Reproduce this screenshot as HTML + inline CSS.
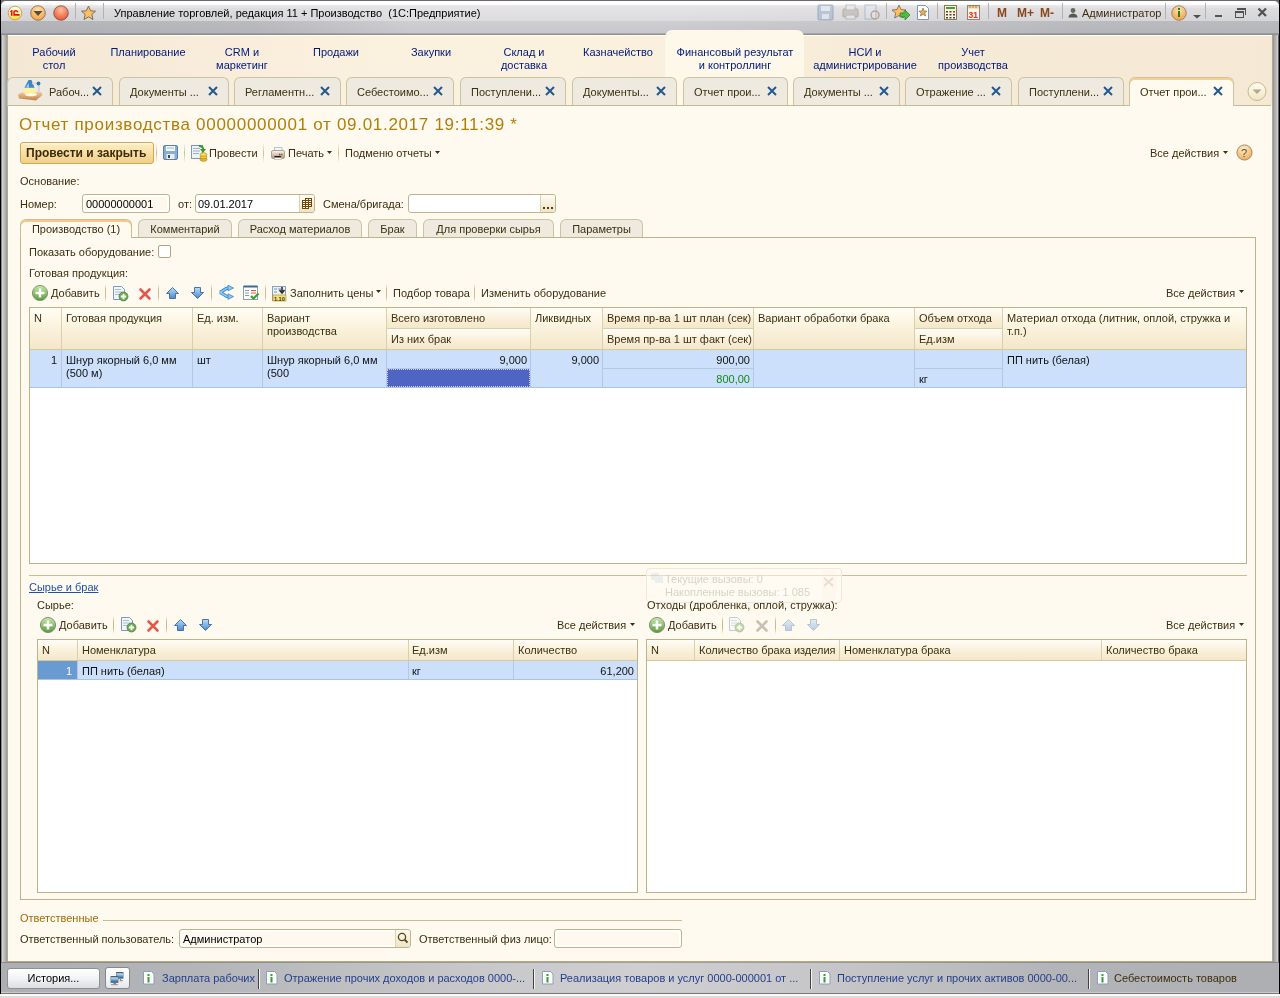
<!DOCTYPE html>
<html><head><meta charset="utf-8">
<style>
*{margin:0;padding:0;box-sizing:border-box}
html,body{width:1280px;height:998px;overflow:hidden;background:#a8aaad;font-family:"Liberation Sans",sans-serif;font-size:11px;color:#3c2f0f}
.a{position:absolute}
.t{position:absolute;white-space:nowrap;line-height:13px;font-size:11px;will-change:transform}
.c{text-align:center}
.r{text-align:right}
svg{position:absolute;overflow:visible}
#frameL{left:0;top:0;width:1px;height:994px;background:#000}
#frameR{left:1279px;top:0;width:1px;height:994px;background:#000}
#frameT{left:1px;top:0;width:1278px;height:1px;background:#6a6a6e}
#corner{left:1px;top:0;width:1278px;height:7px;background:#78787c}
#title{left:1px;top:1px;width:1278px;height:20px;border-radius:5px 5px 0 0;background:linear-gradient(#fff 0,#fff 3px,#e6e4e6 5px,#dcdbdd 20px)}
#band{left:1px;top:21px;width:1278px;height:14px;background:linear-gradient(#cfcfd2 0,#c8c8cc 12px,#8e8e92 13px,#8e8e92 14px)}
#hshade{left:1px;top:21px;width:1278px;height:13px;background:linear-gradient(90deg,rgba(40,45,55,.16) 0,rgba(40,45,55,.12) 20%,rgba(40,45,55,0) 32%,rgba(40,45,55,0) 52%,rgba(40,45,55,.06) 70%,rgba(40,45,55,.12) 85%,rgba(40,45,55,.12) 100%)}
#tshade{left:1px;top:8px;width:1278px;height:13px;background:linear-gradient(90deg,rgba(40,45,55,.05) 0,rgba(40,45,55,.03) 20%,rgba(40,45,55,0) 32%,rgba(40,45,55,0) 52%,rgba(40,45,55,.02) 70%,rgba(40,45,55,.04) 100%)}
#lframe{left:1px;top:35px;width:6px;height:927px;background:linear-gradient(90deg,#8a8a8a 0,#8a8a8a 1px,#d2d2d2 1px,#d2d2d2 2px,#c4c4c4 2px,#c4c4c4 3px,#bcbcbc 3px,#bcbcbc 4px,#acaeb0 4px,#acaeb0 5px,#9ca2a6 5px)}
#rframe{left:1273px;top:35px;width:6px;height:927px;background:linear-gradient(90deg,#9498a0 0,#9498a0 1px,#a8a8b0 1px,#a8a8b0 2px,#b4b4b4 2px,#b4b4b4 3px,#babcbc 3px,#babcbc 4px,#d0d0d4 4px,#d0d0d4 5px,#606060 5px)}
#content{left:7px;top:35px;width:1266px;height:927px;background:#fffaef;border:1px solid #b3aa82;border-top:none;box-shadow:inset 1px 0 0 #fffff4,inset -1px 0 0 #fffff4}
#secbar{left:8px;top:35px;width:1264px;height:70px;background:linear-gradient(#fffff2 0,#fffff2 1px,rgba(255,255,255,0) 1px),linear-gradient(90deg,#f4e8d4 0,#fbf1df 30%,#fbf1df 45%,#f6ebd7 70%,#f5e9d5 100%)}
#status{left:1px;top:962px;width:1278px;height:32px;background:linear-gradient(#a0a0a4 0,#a0a0a4 1px,#cfcfd1 1px,#cfcfd1 30px,#c8cacc 30px,#c8cacc 31px,#7a7a7c 31px)}
#sshade{left:1px;top:962px;width:1278px;height:30px;background:linear-gradient(90deg,rgba(40,45,55,.2) 0,rgba(40,45,55,.16) 15%,rgba(40,45,55,.04) 38%,rgba(40,45,55,0) 50%,rgba(40,45,55,.06) 66%,rgba(40,45,55,.16) 82%,rgba(40,45,55,.2) 100%)}
#bottom{left:0;top:994px;width:1280px;height:4px;background:linear-gradient(#fafafa 0,#fafafa 2px,#dedcd8 2px)}
.sep{position:absolute;width:1px;background:#a9abad;border-right:1px solid #f4f4f4}
.sec{position:absolute;color:#00177e;text-align:center;line-height:13px;white-space:nowrap;will-change:transform}
.tab{position:absolute;top:77px;height:29px;background:#eeeadf;border:1px solid #cdc3a0;border-bottom:none;border-radius:6px 6px 0 0}
.tab .t{top:4px;color:#3d300c;line-height:13px}
.x{position:absolute;top:9px;width:10px;height:10px}
.tabline{left:8px;top:105px;width:1263px;height:1px;background:#c6ba8e}
</style></head><body>
<div class="a" id="corner"></div>
<div class="a" id="title"></div>
<div class="a" id="band"></div>
<div class="a" id="hshade"></div>
<div class="a" id="tshade"></div>
<div class="a" id="lframe"></div>
<div class="a" id="rframe"></div>
<div class="a" id="status"></div>
<div class="a" id="sshade"></div>
<div class="a" id="content"></div>
<div class="a" id="secbar"></div>
<div class="a" id="frameT"></div>
<div class="a" id="frameL"></div>
<div class="a" id="frameR"></div>
<div class="a" id="bottom"></div>

<!-- title bar icons -->
<svg style="left:0;top:0" width="120" height="22">
 <defs>
  <linearGradient id="g1c" x1="0" y1="0" x2="0" y2="1"><stop offset="0" stop-color="#fffde8"/><stop offset="0.55" stop-color="#fff4a0"/><stop offset="1" stop-color="#ffdc10"/></linearGradient>
  <radialGradient id="gor" cx="0.5" cy="0.3" r="0.7"><stop offset="0" stop-color="#ffe2b0"/><stop offset="1" stop-color="#f5a040"/></radialGradient>
  <radialGradient id="grd" cx="0.5" cy="0.3" r="0.7"><stop offset="0" stop-color="#ffc0a0"/><stop offset="1" stop-color="#ee5030"/></radialGradient>
 </defs>
 <circle cx="15" cy="13" r="6.8" fill="url(#g1c)" stroke="#c49868" stroke-width="0.9"/>
 <path d="M10 11.2 L11.6 10 L12.5 10 L12.5 15.8 L10.9 15.8 L10.9 12.2 Z" fill="#e81010"/>
 <path d="M13.3 15.8 L13.3 11.6 Q13.7 10 15.6 10 Q17.9 10 18.5 11.9 L17.1 12.5 Q16.8 11.5 15.7 11.5 Q14.8 11.5 14.8 12.3 L14.8 14.1 L19.6 14.1 L19.6 15.8 Z" fill="#e81010"/>
 <circle cx="38" cy="13" r="7.3" fill="url(#gor)" stroke="#7a6a5a" stroke-width="0.8"/>
 <path d="M33.5 11 L42.5 11 L38 16 Z" fill="#5a4a3a"/>
 <circle cx="61" cy="13" r="7.3" fill="url(#grd)" stroke="#6a5a4a" stroke-width="0.8"/>
 <rect x="75" y="3" width="1" height="16" fill="#b0b2b4"/>
 <path d="M88.5 6 L90.6 10.8 L95.5 11.2 L91.8 14.4 L93 19.5 L88.5 16.8 L84 19.5 L85.2 14.4 L81.5 11.2 L86.4 10.8 Z" fill="#fbc060" stroke="#6e6458" stroke-width="0.9"/>
 <rect x="103" y="3" width="1" height="16" fill="#b0b2b4"/>
</svg>
<div class="t" style="left:114px;top:7px;color:#000">Управление торговлей, редакция 11 + Производство&nbsp; (1С:Предприятие)</div>

<!-- title bar right icons -->
<svg style="left:810px;top:0" width="470" height="22">
 <g opacity="0.45">
  <rect x="8" y="5" width="15" height="15" rx="1" fill="#8aa8c8" stroke="#50709a"/>
  <rect x="11" y="6" width="9" height="5" fill="#e8eef4"/>
  <rect x="12" y="14" width="7" height="5" fill="#e8eef4"/>
  <rect x="33" y="9" width="15" height="8" rx="1" fill="#b0a8a0" stroke="#807068"/>
  <rect x="36" y="5" width="9" height="5" fill="#f0f0f0" stroke="#909090"/>
  <rect x="36" y="15" width="9" height="4" fill="#f0f0f0" stroke="#909090"/>
  <rect x="55" y="5" width="11" height="14" fill="#e0e8f0" stroke="#7890a8"/>
  <circle cx="65" cy="15" r="4" fill="none" stroke="#906040" stroke-width="1.5"/>
 </g>
 <rect x="76" y="3" width="1" height="16" fill="#b0b2b4"/>
 <path d="M89 5 L91 9.5 L96 10 L92.3 13 L93.3 18 L89 15.5 L84.7 18 L85.7 13 L82 10 L87 9.5 Z" fill="#fbc060" stroke="#6e6458" stroke-width="0.8"/>
 <path d="M90 13 h5 v-3 l5 5 l-5 5 v-3 h-5 z" fill="#48c040" stroke="#2a7a2a" stroke-width="0.7"/>
 <path d="M107.5 5.5 h8 l3 3 v11 h-11 z" fill="#fff" stroke="#7a9ab8"/>
 <path d="M113 8 L114.2 11 L117 11.2 L114.8 13 L115.6 16 L113 14.4 L110.4 16 L111.2 13 L109 11.2 L111.8 11 Z" fill="#f0b040" stroke="#6e6458" stroke-width="0.6"/>
 <rect x="127" y="3" width="1" height="16" fill="#b0b2b4"/>
 <rect x="134.5" y="5.5" width="12" height="14" fill="#fbf3d8" stroke="#8a7a5a"/>
 <rect x="136" y="7" width="9" height="2" fill="#40a040"/>
 <g fill="#444"><rect x="136" y="11" width="2" height="1.5"/><rect x="139.5" y="11" width="2" height="1.5"/><rect x="143" y="11" width="2" height="1.5" fill="#e03020"/><rect x="136" y="14" width="2" height="1.5"/><rect x="139.5" y="14" width="2" height="1.5"/><rect x="143" y="14" width="2" height="1.5"/><rect x="136" y="17" width="2" height="1.5"/><rect x="139.5" y="17" width="2" height="1.5"/><rect x="143" y="17" width="2" height="1.5"/></g>
 <rect x="157.5" y="5.5" width="12" height="14" fill="#fdf6ec" stroke="#8a8478"/>
 <rect x="158" y="6" width="11" height="2.5" fill="#f6cc88"/>
 <g fill="#6a4a2a"><rect x="159.5" y="6.5" width="1" height="1"/><rect x="162.5" y="6.5" width="1" height="1"/><rect x="165.5" y="6.5" width="1" height="1"/></g>
 <text x="158.6" y="18" font-family="Liberation Sans" font-size="9.5" font-weight="bold" fill="#e83020" textLength="9.5" lengthAdjust="spacingAndGlyphs">31</text>
 <rect x="178" y="3" width="1" height="16" fill="#b0b2b4"/>
</svg>
<div class="t" style="left:997px;top:7px;color:#8a4818;font-weight:bold;font-size:12px">M</div>
<div class="t" style="left:1017px;top:7px;color:#8a4818;font-weight:bold;font-size:12px">M+</div>
<div class="t" style="left:1040px;top:7px;color:#8a4818;font-weight:bold;font-size:12px">M-</div>
<svg style="left:1060px;top:0" width="220" height="22">
 <rect x="2" y="3" width="1" height="16" fill="#b0b2b4"/>
 <circle cx="13" cy="10.5" r="2.4" fill="#6a6660"/>
 <path d="M8.5 17.5 Q8.5 14 13 13.5 Q17.5 14 17.5 17.5 Z" fill="#5a5650"/>
 <rect x="105" y="3" width="1" height="16" fill="#b0b2b4"/>
 <circle cx="119" cy="13" r="7.3" fill="url(#gor)" stroke="#8a7a6a" stroke-width="0.8"/>
 <rect x="118" y="11" width="2" height="6" fill="#208020"/>
 <rect x="118" y="8" width="2" height="2" fill="#208020"/>
 <path d="M133 15 h8 l-4 3.5 z" fill="#505050"/>
 <rect x="145" y="3" width="1" height="16" fill="#b0b2b4"/>
 <rect x="155" y="15" width="7" height="2" fill="#555"/>
 <rect x="177" y="8" width="9" height="2" fill="#505050"/><rect x="185" y="8" width="1" height="7" fill="#505050"/>
 <rect x="175.5" y="11.5" width="8" height="6" fill="none" stroke="#505050" stroke-width="1"/><rect x="175" y="11" width="9" height="2" fill="#505050"/>
 <path d="M198.5 8.5 L206 16 M206 8.5 L198.5 16" stroke="#505050" stroke-width="2.2"/>
</svg>
<div class="t" style="left:1082px;top:7px;color:#3c2f0f">Администратор</div>
<svg style="left:0;top:0" width="0" height="0"><defs><linearGradient id="gu" x1="0" y1="0" x2="0" y2="1"><stop offset="0" stop-color="#b8dcf8"/><stop offset="1" stop-color="#4a8ad0"/></linearGradient><linearGradient id="gd" x1="0" y1="0" x2="0" y2="1"><stop offset="0" stop-color="#b8dcf8"/><stop offset="1" stop-color="#4a8ad0"/></linearGradient></defs></svg>
<div class="a" style="left:665px;top:30px;width:139px;height:75px;background:#fdf8ea;border-radius:7px 7px 0 0"></div>
<div class="sec" style="left:-26px;top:46px;width:160px">Рабочий<br>стол</div>
<div class="sec" style="left:68px;top:46px;width:160px">Планирование</div>
<div class="sec" style="left:162px;top:46px;width:160px">CRM и<br>маркетинг</div>
<div class="sec" style="left:256px;top:46px;width:160px">Продажи</div>
<div class="sec" style="left:350.5px;top:46px;width:160px">Закупки</div>
<div class="sec" style="left:444px;top:46px;width:160px">Склад и<br>доставка</div>
<div class="sec" style="left:538px;top:46px;width:160px">Казначейство</div>
<div class="sec" style="left:655px;top:46px;width:160px">Финансовый результат<br>и контроллинг</div>
<div class="sec" style="left:785px;top:46px;width:160px">НСИ и<br>администрирование</div>
<div class="sec" style="left:892.5px;top:46px;width:160px">Учет<br>производства</div>
<div class="tab" style="left:7px;width:106px"><div class="t" style="left:41px;top:8px">Рабоч...</div><svg style="left:84px;top:8px" width="10" height="10"><path d="M1 1 L9 9 M9 1 L1 9" stroke="#24588c" stroke-width="2"/></svg></div>
<div class="tab" style="left:119px;width:110px"><div class="t" style="left:10px;top:8px">Документы ...</div><svg style="left:88px;top:8px" width="10" height="10"><path d="M1 1 L9 9 M9 1 L1 9" stroke="#24588c" stroke-width="2"/></svg></div>
<div class="tab" style="left:234px;width:107px"><div class="t" style="left:10px;top:8px">Регламентн...</div><svg style="left:85px;top:8px" width="10" height="10"><path d="M1 1 L9 9 M9 1 L1 9" stroke="#24588c" stroke-width="2"/></svg></div>
<div class="tab" style="left:346px;width:108px"><div class="t" style="left:10px;top:8px">Себестоимо...</div><svg style="left:86px;top:8px" width="10" height="10"><path d="M1 1 L9 9 M9 1 L1 9" stroke="#24588c" stroke-width="2"/></svg></div>
<div class="tab" style="left:460px;width:106px"><div class="t" style="left:10px;top:8px">Поступлени...</div><svg style="left:84px;top:8px" width="10" height="10"><path d="M1 1 L9 9 M9 1 L1 9" stroke="#24588c" stroke-width="2"/></svg></div>
<div class="tab" style="left:572px;width:105px"><div class="t" style="left:10px;top:8px">Документы...</div><svg style="left:83px;top:8px" width="10" height="10"><path d="M1 1 L9 9 M9 1 L1 9" stroke="#24588c" stroke-width="2"/></svg></div>
<div class="tab" style="left:683px;width:105px"><div class="t" style="left:10px;top:8px">Отчет прои...</div><svg style="left:83px;top:8px" width="10" height="10"><path d="M1 1 L9 9 M9 1 L1 9" stroke="#24588c" stroke-width="2"/></svg></div>
<div class="tab" style="left:793px;width:107px"><div class="t" style="left:10px;top:8px">Документы ...</div><svg style="left:85px;top:8px" width="10" height="10"><path d="M1 1 L9 9 M9 1 L1 9" stroke="#24588c" stroke-width="2"/></svg></div>
<div class="tab" style="left:905px;width:107px"><div class="t" style="left:10px;top:8px">Отражение ...</div><svg style="left:85px;top:8px" width="10" height="10"><path d="M1 1 L9 9 M9 1 L1 9" stroke="#24588c" stroke-width="2"/></svg></div>
<div class="tab" style="left:1018px;width:106px"><div class="t" style="left:10px;top:8px">Поступлени...</div><svg style="left:84px;top:8px" width="10" height="10"><path d="M1 1 L9 9 M9 1 L1 9" stroke="#24588c" stroke-width="2"/></svg></div>
<div class="tab" style="left:1129px;width:105px;background:#fffaef;border-color:#cdc3a0;box-shadow:inset 0 2px 0 #f9cf8c;height:29px"><div class="t" style="left:10px;top:8px">Отчет прои...</div><svg style="left:83px;top:8px" width="10" height="10"><path d="M1 1 L9 9 M9 1 L1 9" stroke="#24588c" stroke-width="2"/></svg></div>
<div class="a tabline" style="left:8px;width:1121px"></div>
<div class="a tabline" style="left:1234px;width:37px"></div>
<svg style="left:14px;top:78px" width="32" height="24">
 <defs><linearGradient id="gdesk" x1="0" y1="0" x2="0" y2="1"><stop offset="0" stop-color="#f4c89a"/><stop offset="1" stop-color="#c0844a"/></linearGradient></defs>
 <path d="M4 16.5 L9 14 L27 14 L28.5 17 L22 22.5 L5 20.5 Z" fill="url(#gdesk)"/>
 <ellipse cx="17" cy="16.5" rx="6" ry="1.8" fill="#fffbe8"/>
 <path d="M11 10 L20 10 L22.5 15.5 L9 15.5 Z" fill="#fff39a" opacity="0.9"/>
 <path d="M14.5 2 L17.5 2 L20.5 9.8 L10.5 9.8 Z" fill="#3a86c6"/>
 <path d="M12 9.5 L14.5 5 L15 9.5 Z" fill="#a8d8f8"/>
 <rect x="18" y="4.6" width="6.5" height="1.6" fill="#d6d6de"/>
 <rect x="23.8" y="5.5" width="1.8" height="9.5" fill="#d0d4dc"/>
 <circle cx="24.5" cy="5.5" r="1.9" fill="#2a78b8"/>
</svg>
<svg style="left:1246px;top:81px" width="22" height="22">
 <defs><linearGradient id="gdd" x1="0" y1="0" x2="0" y2="1"><stop offset="0" stop-color="#fffdf4"/><stop offset="1" stop-color="#efe4c4"/></linearGradient></defs>
 <circle cx="11" cy="10.5" r="9" fill="url(#gdd)" stroke="#c8b888" stroke-width="1"/>
 <path d="M6.5 8.5 L15.5 8.5 L11 13 Z" fill="#b8a878"/>
</svg>
<!-- form title -->
<div class="t" style="left:19px;top:115px;font-size:17px;line-height:20px;letter-spacing:0.7px;color:#b07e0a">Отчет производства 00000000001 от 09.01.2017 19:11:39 *</div>
<!-- command bar -->
<div class="a" style="left:20px;top:142px;width:134px;height:22px;border:1px solid #d2a852;border-radius:3px;background:linear-gradient(#fffaf0 0,#fdeabb 12%,#f7dc9f 60%,#efd08a 100%)"></div>
<div class="t" style="left:26px;top:147px;font-weight:bold;font-size:12px;color:#3a2a08">Провести и закрыть</div>
<div class="a" style="left:156px;top:143px;width:1px;height:20px;background:linear-gradient(rgba(200,180,130,0),#cfbd8e,rgba(200,180,130,0))"></div>
<div class="a" style="left:184px;top:143px;width:1px;height:20px;background:linear-gradient(rgba(200,180,130,0),#cfbd8e,rgba(200,180,130,0))"></div>
<div class="a" style="left:263px;top:143px;width:1px;height:20px;background:linear-gradient(rgba(200,180,130,0),#cfbd8e,rgba(200,180,130,0))"></div>
<div class="a" style="left:338px;top:143px;width:1px;height:20px;background:linear-gradient(rgba(200,180,130,0),#cfbd8e,rgba(200,180,130,0))"></div>
<svg style="left:163px;top:145px" width="16" height="16">
 <rect x="0.5" y="0.5" width="14" height="14" rx="1.5" fill="#88aed4" stroke="#5a7ea4"/>
 <rect x="3" y="1" width="9" height="5" fill="#f4f8fc"/>
 <rect x="4" y="2.5" width="7" height="1" fill="#9ab8d8"/>
 <rect x="3.5" y="9" width="8" height="5" fill="#e8eef4"/>
 <rect x="5" y="10" width="2" height="3" fill="#3a4a5a"/>
</svg>
<svg style="left:191px;top:144px" width="18" height="18">
 <rect x="0.5" y="1.5" width="11" height="13" fill="#eef3fa" stroke="#7a98bc"/>
 <g fill="#9ab0c8"><rect x="2" y="4" width="7" height="1"/><rect x="2" y="6.5" width="7" height="1"/><rect x="2" y="9" width="6" height="1"/></g>
 <path d="M8 1 Q13 1 13 5 L15 5 L12 9 L9 5 L11 5 Q11 3 8 3 Z" fill="#3a9a2a"/>
 <ellipse cx="12.5" cy="15.5" rx="3.5" ry="1.8" fill="#e8b820" stroke="#b08010" stroke-width="0.6"/>
 <ellipse cx="12.5" cy="13" rx="3.5" ry="1.8" fill="#f4cc40" stroke="#b08010" stroke-width="0.6"/>
 <ellipse cx="12.5" cy="10.5" rx="3.5" ry="1.8" fill="#f8dc60" stroke="#b08010" stroke-width="0.6"/>
</svg>
<div class="t" style="left:209px;top:147px">Провести</div>
<svg style="left:270px;top:146px" width="16" height="15"><defs><linearGradient id="gprn" x1="0" y1="0" x2="0" y2="1"><stop offset="0" stop-color="#fbf8f4"/><stop offset="1" stop-color="#b89078"/></linearGradient></defs>
 <rect x="4.5" y="1.5" width="7.5" height="5" fill="#f2f6fa" stroke="#b8c8d0"/>
 <rect x="1.5" y="4.5" width="13" height="8" rx="1.5" fill="url(#gprn)" stroke="#a8a49c"/>
 <circle cx="9.7" cy="8.5" r="0.9" fill="#e03020"/><circle cx="11.8" cy="8.5" r="0.9" fill="#30a030"/>
 <rect x="4.5" y="10" width="6.5" height="1.6" fill="#141414"/>
 <rect x="4.5" y="11.8" width="7" height="1.5" fill="#fff" stroke="#a8a8a8" stroke-width="0.6"/>
</svg>
<div class="t" style="left:288px;top:147px">Печать</div>
<svg style="left:327px;top:151px" width="6" height="4"><path d="M0 0 h5 l-2.5 3 z" fill="#3c2f0f"/></svg>
<div class="t" style="left:345px;top:147px">Подменю отчеты</div>
<svg style="left:435px;top:151px" width="6" height="4"><path d="M0 0 h5 l-2.5 3 z" fill="#3c2f0f"/></svg>
<div class="t" style="left:1150px;top:147px">Все действия</div>
<svg style="left:1223px;top:151px" width="6" height="4"><path d="M0 0 h5 l-2.5 3 z" fill="#3c2f0f"/></svg>
<svg style="left:1236px;top:144px" width="18" height="18">
 <defs><radialGradient id="ghelp" cx="0.45" cy="0.3" r="0.75"><stop offset="0" stop-color="#fff0d0"/><stop offset="1" stop-color="#eea848"/></radialGradient></defs>
 <circle cx="8.5" cy="8.5" r="7.6" fill="url(#ghelp)" stroke="#8a7a6a" stroke-width="0.8"/>
 <text x="5" y="12.5" font-family="Liberation Sans" font-size="11" fill="#5a4a3a">?</text>
</svg>
<!-- fields -->
<div class="t" style="left:20px;top:175px">Основание:</div>
<div class="t" style="left:20px;top:198px">Номер:</div>
<div class="a" style="left:82px;top:194px;width:88px;height:19px;border:1px solid #c0b488;border-radius:3px;background:#fdf9ef;box-shadow:inset 0 0 0 2px #fff"></div>
<div class="t" style="left:86px;top:198px;color:#000">00000000001</div>
<div class="t" style="left:178px;top:198px">от:</div>
<div class="a" style="left:195px;top:194px;width:120px;height:19px;border:1px solid #c0b488;border-radius:3px;background:#fff"></div>
<div class="a" style="left:299px;top:195px;width:15px;height:17px;border-left:1px solid #ddd3b4;background:linear-gradient(#fdfbf4,#ede4c8);border-radius:0 2px 2px 0"></div>
<svg style="left:302px;top:198px" width="10" height="11" shape-rendering="crispEdges"><rect x="3" y="0" width="7" height="9" fill="#6a4800"/><rect x="0" y="2" width="7" height="9" fill="#6a4800"/><rect x="4" y="1" width="2" height="1" fill="#fff"/><rect x="7" y="1" width="2" height="1" fill="#fff"/><rect x="1" y="3" width="2" height="1" fill="#fff"/><rect x="4" y="3" width="2" height="1" fill="#fff"/><rect x="7" y="3" width="2" height="1" fill="#fff"/><rect x="1" y="5" width="2" height="1" fill="#fff"/><rect x="4" y="5" width="2" height="1" fill="#fff"/><rect x="7" y="5" width="2" height="1" fill="#fff"/><rect x="1" y="7" width="2" height="1" fill="#fff"/><rect x="4" y="7" width="2" height="1" fill="#fff"/><rect x="7" y="7" width="2" height="1" fill="#fff"/><rect x="1" y="9" width="2" height="1" fill="#fff"/><rect x="4" y="9" width="2" height="1" fill="#fff"/></svg>
<div class="t" style="left:198px;top:198px;color:#000">09.01.2017</div>
<div class="t" style="left:323px;top:198px">Смена/бригада:</div>
<div class="a" style="left:408px;top:194px;width:148px;height:19px;border:1px solid #c0b488;border-radius:3px;background:#fff"></div>
<div class="a" style="left:540px;top:195px;width:15px;height:17px;border-left:1px solid #ddd3b4;background:linear-gradient(#fdfbf4,#ede4c8);border-radius:0 2px 2px 0"></div>
<svg style="left:543px;top:207px" width="10" height="2" shape-rendering="crispEdges"><rect x="0" y="0" width="2" height="2" fill="#5a3c00"/><rect x="4" y="0" width="2" height="2" fill="#5a3c00"/><rect x="8" y="0" width="2" height="2" fill="#5a3c00"/></svg>

<div class="a" style="left:20px;top:237px;width:1236px;height:663px;border:1px solid #bdb289;border-top:none"></div>
<div class="a" style="left:20px;top:237px;width:1236px;height:1px;background:#bdb289"></div>
<div class="a" style="left:20px;top:219px;width:112px;height:19px;background:#fffaef;border:1px solid #c9bd92;border-bottom:none;border-radius:6px 6px 0 0;box-shadow:inset 0 2px 0 #f8c98a"></div>
<div class="t c" style="left:20px;top:223px;width:112px">Производство (1)</div>
<div class="a" style="left:138px;top:219px;width:94px;height:18px;background:#eeeadf;border:1px solid #cdc3a0;border-bottom:none;border-radius:6px 6px 0 0"></div>
<div class="t c" style="left:138px;top:223px;width:94px">Комментарий</div>
<div class="a" style="left:238px;top:219px;width:124px;height:18px;background:#eeeadf;border:1px solid #cdc3a0;border-bottom:none;border-radius:6px 6px 0 0"></div>
<div class="t c" style="left:238px;top:223px;width:124px">Расход материалов</div>
<div class="a" style="left:368px;top:219px;width:49px;height:18px;background:#eeeadf;border:1px solid #cdc3a0;border-bottom:none;border-radius:6px 6px 0 0"></div>
<div class="t c" style="left:368px;top:223px;width:49px">Брак</div>
<div class="a" style="left:423px;top:219px;width:131px;height:18px;background:#eeeadf;border:1px solid #cdc3a0;border-bottom:none;border-radius:6px 6px 0 0"></div>
<div class="t c" style="left:423px;top:223px;width:131px">Для проверки сырья</div>
<div class="a" style="left:560px;top:219px;width:83px;height:18px;background:#eeeadf;border:1px solid #cdc3a0;border-bottom:none;border-radius:6px 6px 0 0"></div>
<div class="t c" style="left:560px;top:223px;width:83px">Параметры</div>
<div class="t" style="left:29px;top:246px">Показать оборудование:</div>
<div class="a" style="left:158px;top:245px;width:13px;height:13px;border:1px solid #b3a57c;border-radius:2px;background:#fff"></div>
<div class="t" style="left:29px;top:267px">Готовая продукция:</div>
<svg style="left:31px;top:284px" width="18" height="18"><defs><linearGradient id="gp40293" x1="0" y1="0" x2="0" y2="1"><stop offset="0" stop-color="#c8e8a8"/><stop offset="1" stop-color="#5a9a3a"/></linearGradient></defs>
<circle cx="9" cy="9" r="7.6" fill="url(#gp40293)" stroke="#7a8a70" stroke-width="0.9"/><path d="M9 4.5 v9 M4.5 9 h9" stroke="#fff" stroke-width="2.6"/></svg>
<div class="t" style="left:51px;top:287px">Добавить</div>
<div class="a" style="left:105px;top:284px;width:1px;height:18px;background:linear-gradient(rgba(200,180,130,0),#cdbb8c 30%,#cdbb8c 70%,rgba(200,180,130,0))"></div>
<svg style="left:113px;top:286px" width="16" height="16"><path d="M0.5 0.5 h8 l3 3 v10 h-11 z" fill="#f2f6fb" stroke="#7a98bc"/><g fill="#a8bcd0"><rect x="2" y="3" width="6" height="1"/><rect x="2" y="5.5" width="7" height="1"/><rect x="2" y="8" width="5" height="1"/></g>
<circle cx="10.5" cy="10.5" r="4.5" fill="#6aaa4a" stroke="#4a7a3a" stroke-width="0.7"/><path d="M10.5 7.8 v5.4 M7.8 10.5 h5.4" stroke="#fff" stroke-width="1.8"/></svg>
<svg style="left:139px;top:288px" width="12" height="12"><path d="M1.5 1.5 L10.5 10.5 M10.5 1.5 L1.5 10.5" stroke="#e2584a" stroke-width="2.6" stroke-linecap="round"/></svg>
<div class="a" style="left:158px;top:284px;width:1px;height:18px;background:linear-gradient(rgba(200,180,130,0),#cdbb8c 30%,#cdbb8c 70%,rgba(200,180,130,0))"></div>
<svg style="left:166px;top:287px" width="14" height="13"><path d="M6.5 0.5 L12.5 6.5 L9.5 6.5 L9.5 11.5 L3.5 11.5 L3.5 6.5 L0.5 6.5 Z" fill="url(#gu)" stroke="#3a6a9a" stroke-width="0.9" stroke-linejoin="round"/></svg>
<svg style="left:191px;top:287px" width="14" height="13"><path d="M3.5 0.5 L9.5 0.5 L9.5 5.5 L12.5 5.5 L6.5 11.5 L0.5 5.5 L3.5 5.5 Z" fill="url(#gd)" stroke="#3a6a9a" stroke-width="0.9" stroke-linejoin="round"/></svg>
<div class="a" style="left:211px;top:284px;width:1px;height:18px;background:linear-gradient(rgba(200,180,130,0),#cdbb8c 30%,#cdbb8c 70%,rgba(200,180,130,0))"></div>
<svg style="left:218px;top:285px" width="17" height="16"><path d="M1.5 7.4 C4.5 7.4 6.5 3 10.5 3 M1.5 7.4 C4.5 7.4 6.5 11.6 10.5 11.6" fill="none" stroke="#3a88d0" stroke-width="3.4"/><path d="M1.5 7.4 C4.5 7.4 6.5 3 10.5 3 M1.5 7.4 C4.5 7.4 6.5 11.6 10.5 11.6" fill="none" stroke="#8cc8f4" stroke-width="1.6"/><path d="M10 0.2 L15.5 3 L10 5.8 Z M10 8.8 L15.5 11.6 L10 14.4 Z" fill="#8cc8f4" stroke="#3a88d0" stroke-width="0.8" stroke-linejoin="round"/></svg>
<svg style="left:243px;top:285px" width="17" height="16"><rect x="0.5" y="1.5" width="14" height="13" fill="#fff" stroke="#8aa0b8"/><rect x="0.5" y="0.5" width="14" height="2" fill="#3a6a9a"/><g fill="#8a9ab0"><rect x="2" y="5" width="4" height="1"/><rect x="2" y="7.5" width="4" height="1"/><rect x="2" y="10" width="4" height="1"/></g><g fill="#e05040"><rect x="8" y="5" width="5" height="1"/><rect x="8" y="7.5" width="5" height="1"/></g><path d="M8 11 L10.5 13.5 L15.5 8.5" fill="none" stroke="#3aa02a" stroke-width="2.2"/></svg>
<div class="a" style="left:265px;top:284px;width:1px;height:18px;background:linear-gradient(rgba(200,180,130,0),#cdbb8c 30%,#cdbb8c 70%,rgba(200,180,130,0))"></div>
<svg style="left:272px;top:286px" width="16" height="16"><rect x="0.5" y="0.5" width="13" height="14" fill="#e8f0f8" stroke="#8aa0b8"/><g fill="#b0c4d8"><rect x="2" y="2" width="3" height="2"/><rect x="6" y="2" width="3" height="2"/><rect x="2" y="5" width="3" height="2"/></g><rect x="1" y="9" width="13" height="6" fill="#f8e070" stroke="#a89030" stroke-width="0.6"/><text x="2" y="14.5" font-family="Liberation Sans" font-size="5.5" font-weight="bold" fill="#303030">1.10</text><path d="M10 1 v5 M7.5 4 L10 7 L12.5 4" fill="none" stroke="#303030" stroke-width="1.6"/></svg>
<div class="t" style="left:290px;top:287px">Заполнить цены</div>
<svg style="left:376px;top:290px" width="6" height="4"><path d="M0 0 h5 l-2.5 3 z" fill="#3c2f0f"/></svg>
<div class="a" style="left:386px;top:284px;width:1px;height:18px;background:linear-gradient(rgba(200,180,130,0),#cdbb8c 30%,#cdbb8c 70%,rgba(200,180,130,0))"></div>
<div class="t" style="left:393px;top:287px">Подбор товара</div>
<div class="a" style="left:474px;top:284px;width:1px;height:18px;background:linear-gradient(rgba(200,180,130,0),#cdbb8c 30%,#cdbb8c 70%,rgba(200,180,130,0))"></div>
<div class="t" style="left:481px;top:287px">Изменить оборудование</div>
<div class="t" style="left:1166px;top:287px">Все действия</div>
<svg style="left:1239px;top:290px" width="6" height="4"><path d="M0 0 h5 l-2.5 3 z" fill="#3c2f0f"/></svg>
<div class="a" style="left:29px;top:307px;width:1218px;height:257px;border:1px solid #bdb289;background:#fff"></div>
<div class="a" style="left:30px;top:308px;width:1216px;height:41px;background:linear-gradient(#fffdf4,#fbf3df 45%,#f4e7c9)"></div>
<div class="a" style="left:30px;top:349px;width:1216px;height:1px;background:#d6c8a0"></div>
<div class="a" style="left:30px;top:350px;width:1216px;height:37px;background:#cce0fb"></div>
<div class="a" style="left:30px;top:387px;width:1216px;height:1px;background:#a9c3e4"></div>
<div class="a" style="left:61px;top:308px;width:1px;height:41px;background:#dccfa8"></div>
<div class="a" style="left:61px;top:350px;width:1px;height:37px;background:#b4c8e2"></div>
<div class="a" style="left:192px;top:308px;width:1px;height:41px;background:#dccfa8"></div>
<div class="a" style="left:192px;top:350px;width:1px;height:37px;background:#b4c8e2"></div>
<div class="a" style="left:262px;top:308px;width:1px;height:41px;background:#dccfa8"></div>
<div class="a" style="left:262px;top:350px;width:1px;height:37px;background:#b4c8e2"></div>
<div class="a" style="left:386px;top:308px;width:1px;height:41px;background:#dccfa8"></div>
<div class="a" style="left:386px;top:350px;width:1px;height:37px;background:#b4c8e2"></div>
<div class="a" style="left:530px;top:308px;width:1px;height:41px;background:#dccfa8"></div>
<div class="a" style="left:530px;top:350px;width:1px;height:37px;background:#b4c8e2"></div>
<div class="a" style="left:602px;top:308px;width:1px;height:41px;background:#dccfa8"></div>
<div class="a" style="left:602px;top:350px;width:1px;height:37px;background:#b4c8e2"></div>
<div class="a" style="left:753px;top:308px;width:1px;height:41px;background:#dccfa8"></div>
<div class="a" style="left:753px;top:350px;width:1px;height:37px;background:#b4c8e2"></div>
<div class="a" style="left:914px;top:308px;width:1px;height:41px;background:#dccfa8"></div>
<div class="a" style="left:914px;top:350px;width:1px;height:37px;background:#b4c8e2"></div>
<div class="a" style="left:1002px;top:308px;width:1px;height:41px;background:#dccfa8"></div>
<div class="a" style="left:1002px;top:350px;width:1px;height:37px;background:#b4c8e2"></div>
<div class="a" style="left:387px;top:308px;width:143px;height:20px;background:linear-gradient(#fffdf6,#faf1dc 50%,#f4e7c9)"></div>
<div class="a" style="left:387px;top:329px;width:143px;height:20px;background:linear-gradient(#fffdf6,#faf1dc 50%,#f4e7c9)"></div>
<div class="a" style="left:387px;top:328px;width:143px;height:1px;background:#dccfa8"></div>
<div class="a" style="left:387px;top:368px;width:143px;height:1px;background:#b4c8e2"></div>
<div class="a" style="left:603px;top:308px;width:150px;height:20px;background:linear-gradient(#fffdf6,#faf1dc 50%,#f4e7c9)"></div>
<div class="a" style="left:603px;top:329px;width:150px;height:20px;background:linear-gradient(#fffdf6,#faf1dc 50%,#f4e7c9)"></div>
<div class="a" style="left:603px;top:328px;width:150px;height:1px;background:#dccfa8"></div>
<div class="a" style="left:603px;top:368px;width:150px;height:1px;background:#b4c8e2"></div>
<div class="a" style="left:915px;top:308px;width:87px;height:20px;background:linear-gradient(#fffdf6,#faf1dc 50%,#f4e7c9)"></div>
<div class="a" style="left:915px;top:329px;width:87px;height:20px;background:linear-gradient(#fffdf6,#faf1dc 50%,#f4e7c9)"></div>
<div class="a" style="left:915px;top:328px;width:87px;height:1px;background:#dccfa8"></div>
<div class="a" style="left:915px;top:368px;width:87px;height:1px;background:#b4c8e2"></div>
<div class="t" style="left:34px;top:312px;color:#3d300c">N</div>
<div class="t" style="left:66px;top:312px;color:#3d300c">Готовая продукция</div>
<div class="t" style="left:197px;top:312px;color:#3d300c">Ед. изм.</div>
<div class="t" style="left:267px;top:312px;color:#3d300c">Вариант<br>производства</div>
<div class="t" style="left:391px;top:312px;color:#3d300c">Всего изготовлено</div>
<div class="t" style="left:535px;top:312px;color:#3d300c">Ликвидных</div>
<div class="t" style="left:607px;top:312px;color:#3d300c">Время пр-ва 1 шт план (сек)</div>
<div class="t" style="left:758px;top:312px;color:#3d300c">Вариант обработки брака</div>
<div class="t" style="left:919px;top:312px;color:#3d300c">Объем отхода</div>
<div class="t" style="left:1007px;top:312px;color:#3d300c">Материал отхода (литник, оплой, стружка и<br>т.п.)</div>
<div class="t" style="left:391px;top:333px;color:#3d300c">Из них брак</div>
<div class="t" style="left:607px;top:333px;color:#3d300c">Время пр-ва 1 шт факт (сек)</div>
<div class="t" style="left:919px;top:333px;color:#3d300c">Ед.изм</div>
<div class="t r" style="left:30px;top:354px;width:27px;color:#111">1</div>
<div class="t" style="left:66px;top:354px;color:#111">Шнур якорный 6,0 мм<br>(500 м)</div>
<div class="t" style="left:197px;top:354px;color:#111">шт</div>
<div class="t" style="left:267px;top:354px;color:#111">Шнур якорный 6,0 мм<br>(500</div>
<div class="t r" style="left:387px;top:354px;width:140px;color:#111">9,000</div>
<div class="a" style="left:387px;top:369px;width:143px;height:18px;background:#5064c4;outline:1px dotted #c8d0f0;outline-offset:-1px"></div>
<div class="t r" style="left:531px;top:354px;width:68px;color:#111">9,000</div>
<div class="t r" style="left:603px;top:354px;width:147px;color:#111">900,00</div>
<div class="t r" style="left:603px;top:373px;width:147px;color:#15881a">800,00</div>
<div class="t" style="left:919px;top:373px;color:#111">кг</div>
<div class="t" style="left:1007px;top:354px;color:#111">ПП нить (белая)</div>
<div class="a" style="left:29px;top:575px;width:1218px;height:1px;background:#c9bd94"></div>
<div class="t" style="left:29px;top:581px;color:#1f4fb2;text-decoration:underline">Сырье и брак</div>
<div class="a" style="left:646px;top:568px;width:196px;height:35px;border:1px solid #efe9da;border-radius:4px;background:rgba(255,252,244,0.55)"></div>
<div class="t" style="left:665px;top:573px;color:#d9d4c6;line-height:13px">Текущие вызовы: 0<br>Накопленные вызовы: 1 085</div>
<svg style="left:650px;top:572px" width="14" height="14" opacity="0.15"><rect x="1" y="1" width="8" height="7" fill="#8ab" /><rect x="5" y="4" width="8" height="7" fill="#8ab"/></svg>
<div class="a" style="left:822px;top:570px;width:14px;height:30px;background:rgba(250,225,215,0.12)"></div>
<svg style="left:823px;top:577px" width="11" height="10"><path d="M1 1 L10 9 M10 1 L1 9" stroke="#efdcd2" stroke-width="2"/></svg>
<div class="t" style="left:37px;top:599px">Сырье:</div>
<svg style="left:39px;top:616px" width="18" height="18"><defs><linearGradient id="gp48625" x1="0" y1="0" x2="0" y2="1"><stop offset="0" stop-color="#c8e8a8"/><stop offset="1" stop-color="#5a9a3a"/></linearGradient></defs>
<circle cx="9" cy="9" r="7.6" fill="url(#gp48625)" stroke="#7a8a70" stroke-width="0.9"/><path d="M9 4.5 v9 M4.5 9 h9" stroke="#fff" stroke-width="2.6"/></svg>
<div class="t" style="left:59px;top:619px">Добавить</div>
<div class="a" style="left:113px;top:616px;width:1px;height:18px;background:linear-gradient(rgba(200,180,130,0),#cdbb8c 30%,#cdbb8c 70%,rgba(200,180,130,0))"></div>
<svg style="left:121px;top:617px" width="16" height="16"><path d="M0.5 0.5 h8 l3 3 v10 h-11 z" fill="#f2f6fb" stroke="#7a98bc"/><g fill="#a8bcd0"><rect x="2" y="3" width="6" height="1"/><rect x="2" y="5.5" width="7" height="1"/><rect x="2" y="8" width="5" height="1"/></g>
<circle cx="10.5" cy="10.5" r="4.5" fill="#6aaa4a" stroke="#4a7a3a" stroke-width="0.7"/><path d="M10.5 7.8 v5.4 M7.8 10.5 h5.4" stroke="#fff" stroke-width="1.8"/></svg>
<svg style="left:147px;top:620px" width="12" height="12"><path d="M1.5 1.5 L10.5 10.5 M10.5 1.5 L1.5 10.5" stroke="#e2584a" stroke-width="2.6" stroke-linecap="round"/></svg>
<div class="a" style="left:166px;top:616px;width:1px;height:18px;background:linear-gradient(rgba(200,180,130,0),#cdbb8c 30%,#cdbb8c 70%,rgba(200,180,130,0))"></div>
<svg style="left:174px;top:619px" width="14" height="13"><path d="M6.5 0.5 L12.5 6.5 L9.5 6.5 L9.5 11.5 L3.5 11.5 L3.5 6.5 L0.5 6.5 Z" fill="url(#gu)" stroke="#3a6a9a" stroke-width="0.9" stroke-linejoin="round"/></svg>
<svg style="left:199px;top:619px" width="14" height="13"><path d="M3.5 0.5 L9.5 0.5 L9.5 5.5 L12.5 5.5 L6.5 11.5 L0.5 5.5 L3.5 5.5 Z" fill="url(#gd)" stroke="#3a6a9a" stroke-width="0.9" stroke-linejoin="round"/></svg>
<div class="t" style="left:557px;top:619px">Все действия</div>
<svg style="left:630px;top:623px" width="6" height="4"><path d="M0 0 h5 l-2.5 3 z" fill="#3c2f0f"/></svg>
<div class="t" style="left:647px;top:599px">Отходы (дробленка, оплой, стружка):</div>
<svg style="left:648px;top:616px" width="18" height="18"><defs><linearGradient id="gp657625" x1="0" y1="0" x2="0" y2="1"><stop offset="0" stop-color="#c8e8a8"/><stop offset="1" stop-color="#5a9a3a"/></linearGradient></defs>
<circle cx="9" cy="9" r="7.6" fill="url(#gp657625)" stroke="#7a8a70" stroke-width="0.9"/><path d="M9 4.5 v9 M4.5 9 h9" stroke="#fff" stroke-width="2.6"/></svg>
<div class="t" style="left:668px;top:619px">Добавить</div>
<div class="a" style="left:722px;top:616px;width:1px;height:18px;background:linear-gradient(rgba(200,180,130,0),#cdbb8c 30%,#cdbb8c 70%,rgba(200,180,130,0))"></div>
<svg style="left:729px;top:617px" width="16" height="16" opacity="0.45"><path d="M0.5 0.5 h8 l3 3 v10 h-11 z" fill="#f2f6fb" stroke="#7a98bc"/><g fill="#a8bcd0"><rect x="2" y="3" width="6" height="1"/><rect x="2" y="5.5" width="7" height="1"/><rect x="2" y="8" width="5" height="1"/></g>
<circle cx="10.5" cy="10.5" r="4.5" fill="#6aaa4a" stroke="#4a7a3a" stroke-width="0.7"/><path d="M10.5 7.8 v5.4 M7.8 10.5 h5.4" stroke="#fff" stroke-width="1.8"/></svg>
<svg style="left:756px;top:620px" width="12" height="12"><path d="M1.5 1.5 L10.5 10.5 M10.5 1.5 L1.5 10.5" stroke="#c8c0b0" stroke-width="2.6" stroke-linecap="round"/></svg>
<div class="a" style="left:775px;top:616px;width:1px;height:18px;background:linear-gradient(rgba(200,180,130,0),#cdbb8c 30%,#cdbb8c 70%,rgba(200,180,130,0))"></div>
<svg style="left:782px;top:619px" width="14" height="13" opacity="0.4"><path d="M6.5 0.5 L12.5 6.5 L9.5 6.5 L9.5 11.5 L3.5 11.5 L3.5 6.5 L0.5 6.5 Z" fill="url(#gu)" stroke="#3a6a9a" stroke-width="0.9" stroke-linejoin="round"/></svg>
<svg style="left:807px;top:619px" width="14" height="13" opacity="0.4"><path d="M3.5 0.5 L9.5 0.5 L9.5 5.5 L12.5 5.5 L6.5 11.5 L0.5 5.5 L3.5 5.5 Z" fill="url(#gd)" stroke="#3a6a9a" stroke-width="0.9" stroke-linejoin="round"/></svg>
<div class="t" style="left:1166px;top:619px">Все действия</div>
<svg style="left:1239px;top:623px" width="6" height="4"><path d="M0 0 h5 l-2.5 3 z" fill="#3c2f0f"/></svg>
<div class="a" style="left:37px;top:639px;width:601px;height:254px;border:1px solid #bdb289;background:#fff"></div>
<div class="a" style="left:38px;top:640px;width:599px;height:20px;background:linear-gradient(#fffdf6,#faf1dc 50%,#f4e7c9)"></div>
<div class="a" style="left:38px;top:660px;width:599px;height:1px;background:#d6c8a0"></div>
<div class="a" style="left:77px;top:640px;width:1px;height:20px;background:#dccfa8"></div>
<div class="a" style="left:408px;top:640px;width:1px;height:20px;background:#dccfa8"></div>
<div class="a" style="left:513px;top:640px;width:1px;height:20px;background:#dccfa8"></div>
<div class="t" style="left:42px;top:644px;color:#3d300c">N</div>
<div class="t" style="left:82px;top:644px;color:#3d300c">Номенклатура</div>
<div class="t" style="left:412px;top:644px;color:#3d300c">Ед.изм</div>
<div class="t" style="left:518px;top:644px;color:#3d300c">Количество</div>
<div class="a" style="left:38px;top:661px;width:599px;height:18px;background:#cce0fb"></div>
<div class="a" style="left:38px;top:679px;width:599px;height:1px;background:#a9c3e4"></div>
<div class="a" style="left:38px;top:661px;width:39px;height:18px;background:#6a9ad2"></div>
<div class="a" style="left:77px;top:661px;width:1px;height:18px;background:#b4c8e2"></div>
<div class="a" style="left:408px;top:661px;width:1px;height:18px;background:#b4c8e2"></div>
<div class="a" style="left:513px;top:661px;width:1px;height:18px;background:#b4c8e2"></div>
<div class="t r" style="left:38px;top:665px;width:34px;color:#fff">1</div>
<div class="t" style="left:82px;top:665px;color:#111">ПП нить (белая)</div>
<div class="t" style="left:412px;top:665px;color:#111">кг</div>
<div class="t r" style="left:514px;top:665px;width:120px;color:#111">61,200</div>
<div class="a" style="left:646px;top:639px;width:601px;height:254px;border:1px solid #bdb289;background:#fff"></div>
<div class="a" style="left:647px;top:640px;width:599px;height:20px;background:linear-gradient(#fffdf6,#faf1dc 50%,#f4e7c9)"></div>
<div class="a" style="left:647px;top:660px;width:599px;height:1px;background:#d6c8a0"></div>
<div class="a" style="left:694px;top:640px;width:1px;height:20px;background:#dccfa8"></div>
<div class="a" style="left:839px;top:640px;width:1px;height:20px;background:#dccfa8"></div>
<div class="a" style="left:1101px;top:640px;width:1px;height:20px;background:#dccfa8"></div>
<div class="t" style="left:651px;top:644px;color:#3d300c">N</div>
<div class="t" style="left:699px;top:644px;color:#3d300c">Количество брака изделия</div>
<div class="t" style="left:844px;top:644px;color:#3d300c">Номенклатура брака</div>
<div class="t" style="left:1106px;top:644px;color:#3d300c">Количество брака</div>
<div class="t" style="left:20px;top:912px;color:#a06a08">Ответственные</div>
<div class="a" style="left:103px;top:920px;width:579px;height:1px;background:#c9bd94"></div>
<div class="t" style="left:20px;top:933px">Ответственный пользователь:</div>
<div class="a" style="left:179px;top:929px;width:232px;height:19px;border:1px solid #c0b488;border-radius:3px;background:#fdf9ef;box-shadow:inset 0 0 0 2px #fff"></div>
<div class="a" style="left:395px;top:930px;width:15px;height:17px;border-left:1px solid #ddd3b4;background:linear-gradient(#fdfbf4,#ede4c8);border-radius:0 2px 2px 0"></div>
<svg style="left:397px;top:932px" width="12" height="12"><circle cx="5" cy="5" r="3.6" fill="none" stroke="#5a4610" stroke-width="1.3"/><path d="M7.6 7.6 L10.5 10.5" stroke="#5a4610" stroke-width="1.8"/></svg>
<div class="t" style="left:183px;top:933px;color:#000">Администратор</div>
<div class="t" style="left:419px;top:933px">Ответственный физ лицо:</div>
<div class="a" style="left:554px;top:929px;width:128px;height:19px;border:1px solid #c0b488;border-radius:3px;background:#fdf9ef;box-shadow:inset 0 0 0 2px #fff"></div>
<div class="a" style="left:7px;top:968px;width:93px;height:21px;border:1px solid #8e9092;border-radius:3px;background:linear-gradient(#ffffff,#f2f3f5 50%,#dcdee2)"></div>
<div class="t c" style="left:7px;top:972px;width:93px;color:#000">История...</div>
<div class="a" style="left:105px;top:967px;width:25px;height:22px;border:1px solid #858789;border-radius:3px;background:linear-gradient(#ffffff,#f6f7f9 50%,#e4e6ea)"></div>
<svg style="left:104px;top:964px" width="28" height="28"><defs><linearGradient id="gscr" x1="0" y1="0" x2="0" y2="1"><stop offset="0" stop-color="#18486e"/><stop offset="0.25" stop-color="#c8dcec"/><stop offset="0.5" stop-color="#8ab4d8"/><stop offset="1" stop-color="#1a66a6"/></linearGradient></defs>
<rect x="12" y="8" width="7.5" height="6.8" fill="#787878"/><rect x="12.6" y="8.4" width="6.4" height="5.6" fill="url(#gscr)"/><rect x="15.8" y="14.8" width="1.2" height="1.8" fill="#808080"/><rect x="15.8" y="16.2" width="3" height="1" fill="#808080"/>
<rect x="6.5" y="12" width="8" height="7" fill="#787878"/><rect x="7.1" y="12.4" width="6.8" height="5.8" fill="url(#gscr)"/><rect x="9.5" y="19" width="2.5" height="1.5" fill="#808080"/><rect x="7" y="20.2" width="7" height="1" fill="#909090"/>
</svg>
<svg style="left:143px;top:971px" width="12" height="14"><path d="M0.5 0.5 h8 l2.5 2.5 v10 h-10.5 z" fill="#fff" stroke="#8aa0b8"/><rect x="4.5" y="6" width="2" height="5.5" fill="#30a030"/><rect x="4.5" y="3" width="2" height="2" fill="#30a030"/></svg>
<div class="t" style="left:162px;top:972px;color:#233f8c">Зарплата рабочих</div>
<div class="a" style="left:258px;top:969px;width:2px;height:20px;background:linear-gradient(90deg,#3e4246 0,#3e4246 1px,#f4f4f6 1px)"></div>
<svg style="left:266px;top:971px" width="12" height="14"><path d="M0.5 0.5 h8 l2.5 2.5 v10 h-10.5 z" fill="#fff" stroke="#8aa0b8"/><rect x="4.5" y="6" width="2" height="5.5" fill="#30a030"/><rect x="4.5" y="3" width="2" height="2" fill="#30a030"/></svg>
<div class="t" style="left:284px;top:972px;color:#233f8c">Отражение прочих доходов и расходов 0000-...</div>
<div class="a" style="left:533px;top:969px;width:2px;height:20px;background:linear-gradient(90deg,#3e4246 0,#3e4246 1px,#f4f4f6 1px)"></div>
<svg style="left:542px;top:971px" width="12" height="14"><path d="M0.5 0.5 h8 l2.5 2.5 v10 h-10.5 z" fill="#fff" stroke="#8aa0b8"/><rect x="4.5" y="6" width="2" height="5.5" fill="#30a030"/><rect x="4.5" y="3" width="2" height="2" fill="#30a030"/></svg>
<div class="t" style="left:560px;top:972px;color:#233f8c">Реализация товаров и услуг 0000-000001 от ...</div>
<div class="a" style="left:810px;top:969px;width:2px;height:20px;background:linear-gradient(90deg,#3e4246 0,#3e4246 1px,#f4f4f6 1px)"></div>
<svg style="left:819px;top:971px" width="12" height="14"><path d="M0.5 0.5 h8 l2.5 2.5 v10 h-10.5 z" fill="#fff" stroke="#8aa0b8"/><rect x="4.5" y="6" width="2" height="5.5" fill="#30a030"/><rect x="4.5" y="3" width="2" height="2" fill="#30a030"/></svg>
<div class="t" style="left:837px;top:972px;color:#233f8c">Поступление услуг и прочих активов 0000-00...</div>
<div class="a" style="left:1088px;top:969px;width:2px;height:20px;background:linear-gradient(90deg,#3e4246 0,#3e4246 1px,#f4f4f6 1px)"></div>
<svg style="left:1097px;top:971px" width="12" height="14"><path d="M0.5 0.5 h8 l2.5 2.5 v10 h-10.5 z" fill="#fff" stroke="#8aa0b8"/><rect x="4.5" y="6" width="2" height="5.5" fill="#30a030"/><rect x="4.5" y="3" width="2" height="2" fill="#30a030"/></svg>
<div class="t" style="left:1114px;top:972px;color:#3c2f0f">Себестоимость товаров</div>
</body></html>
